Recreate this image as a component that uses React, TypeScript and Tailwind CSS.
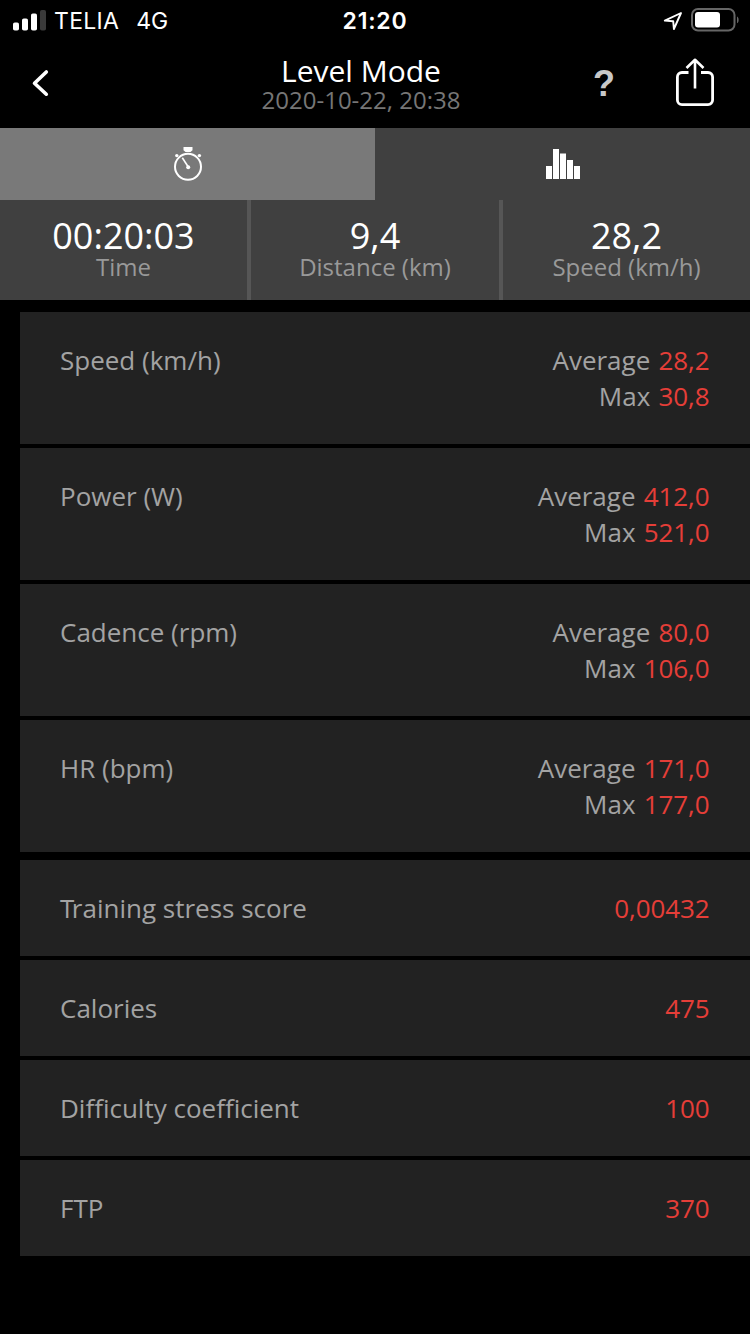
type Metric = { label: string; average: string; max: string };
type Total = { label: string; value: string; labelClass?: string };

const summary: Total[] = [
  { label: "Time", value: "00:20:03" },
  { label: "Distance (km)", value: "9,4" },
  { label: "Speed (km/h)", value: "28,2" },
];

const metrics: Metric[] = [
  { label: "Speed (km/h)", average: "28,2", max: "30,8" },
  { label: "Power (W)", average: "412,0", max: "521,0" },
  { label: "Cadence (rpm)", average: "80,0", max: "106,0" },
  { label: "HR (bpm)", average: "171,0", max: "177,0" },
];

const totals: Total[] = [
  // pull the "r" in under the "T"
  {
    label: "Training stress score",
    value: "0,00432",
    labelClass: "first-letter:tracking-[-2.5px]",
  },
  { label: "Calories", value: "475" },
  { label: "Difficulty coefficient", value: "100" },
  { label: "FTP", value: "370" },
];

function StatusBar() {
  return (
    <div className="grid h-10 grid-cols-3 items-center pl-[13px] pr-[11px] font-['Inter',sans-serif] text-[23px] leading-[38px]">
      <div className="flex items-center">
        <svg className="mr-[8px]" width="33" height="21" viewBox="0 0 33 21">
          <g fill="#fff">
            <rect x="0" y="12.5" width="6" height="8" rx="1.8" />
            <rect x="9" y="8.5" width="6" height="12" rx="1.8" />
            <rect x="18" y="3.5" width="6" height="17" rx="1.8" />
          </g>
          <rect x="27" y="0" width="6" height="20.5" rx="1.8" fill="#3a3a3a" />
        </svg>
        <span className="pt-[2px] tracking-[0.3px]">TELIA</span>
        <span className="ml-[17px] pt-[2px]">4G</span>
      </div>
      <div className="pt-[2px] pr-[2px] text-center font-semibold tracking-[0.8px]">21:20</div>
      <div className="flex items-center justify-end gap-[8px]">
        <svg className="mt-[1px]" width="20" height="20" viewBox="0 0 20 20" fill="none">
          <path
            d="M18 2 L1.8 9.6 L10.2 10.2 L10.9 18 Z"
            stroke="#fff"
            strokeWidth="1.9"
            strokeLinejoin="round"
          />
        </svg>
        <svg width="48" height="24" viewBox="0 0 48 24" fill="none">
          <rect x="1" y="1" width="42.5" height="21.5" rx="6" stroke="#666" strokeWidth="2" />
          <rect x="4" y="4" width="25" height="15.5" rx="3" fill="#fff" />
          <path d="M46 8.5 C48.2 9.8 48.2 14 46 15.2 Z" fill="#666" />
        </svg>
      </div>
    </div>
  );
}

function Header() {
  return (
    <header className="grid h-[88px] grid-cols-[200px_322px_228px]">
      <button className="flex items-start pl-[31px] pt-[29px]" aria-label="Back">
        <svg width="18" height="28" viewBox="0 0 18 28" fill="none">
          <path
            d="M15.3 3 L3.5 14.2 L15.3 25.2"
            stroke="#fff"
            strokeWidth="3.6"
            strokeLinecap="round"
            strokeLinejoin="round"
          />
        </svg>
      </button>
      <div className="flex flex-col items-center pt-[15px]">
        <h1 className="text-[30px] leading-8">Level Mode</h1>
        <p className="text-2xl leading-[26px] text-[#767676]">2020-10-22, 20:38</p>
      </div>
      <div className="flex items-start justify-end pr-9 pt-[18px]">
        <button
          className="mr-[61px] mt-[6px] font-['Liberation_Sans',sans-serif] text-[36px] leading-10 font-bold text-[#c8c8c8]"
          aria-label="Help"
        >
          ?
        </button>
        <button aria-label="Share">
          <svg width="38" height="49" viewBox="0 0 38 49" fill="none" stroke="#fff">
            <path
              d="M12.5 14.5 H6 A4.6 4.6 0 0 0 1.4 19.1 V42 A4.6 4.6 0 0 0 6 46.6 H32 A4.6 4.6 0 0 0 36.6 42 V19.1 A4.6 4.6 0 0 0 32 14.5 H25"
              strokeWidth="2.8"
            />
            <path
              d="M19 30.5 V2 M10.5 10 L19 1.8 L27.5 10"
              strokeWidth="2.6"
              strokeLinejoin="round"
            />
          </svg>
        </button>
      </div>
    </header>
  );
}

function Tabs() {
  return (
    <div className="grid h-[72px] grid-cols-2">
      <button className="flex items-center justify-center bg-[#797979]" aria-label="Summary">
        <svg width="32" height="36" viewBox="0 0 32 36" fill="none">
          <path d="M11.5 1 H20.5 V4.2 L18.5 6 H13.5 L11.5 4.2 Z" fill="#fff" />
          <circle cx="16" cy="20.8" r="13" stroke="#fff" strokeWidth="2" />
          <path d="M10.3 11.8 L16.3 21" stroke="#fff" strokeWidth="1.6" />
          <circle cx="16.2" cy="21.2" r="2" fill="#fff" />
          <circle cx="4.8" cy="9.6" r="1.7" fill="#fff" />
          <circle cx="27.4" cy="9.6" r="1.7" fill="#fff" />
        </svg>
      </button>
      <button className="flex items-center justify-center bg-[#404040]" aria-label="Charts">
        <svg width="34" height="30" viewBox="0 0 34 30" fill="#fff">
          <rect x="0" y="17" width="6" height="13" />
          <rect x="7" y="0" width="6" height="30" />
          <rect x="14" y="4.5" width="6" height="25.5" />
          <rect x="21" y="11" width="6" height="19" />
          <rect x="28" y="17" width="6" height="13" />
        </svg>
      </button>
    </div>
  );
}

export default function App() {
  return (
    <main className="flex h-[1334px] w-[750px] flex-col bg-black font-['Open_Sans',sans-serif] text-white">
      <StatusBar />
      <Header />
      <Tabs />
      <section className="grid h-[100px] grid-cols-[247px_248px_247px] gap-1 bg-[#565656]">
        {summary.map((item) => (
          <div key={item.label} className="flex flex-col items-center bg-[#404040] pt-[18px]">
            <span className="text-4xl leading-9">{item.value}</span>
            <span className="text-2xl leading-[26px] text-[#999]">{item.label}</span>
          </div>
        ))}
      </section>
      <section className="mt-3 flex flex-col gap-1 pl-5 text-[26px] text-[#a3a3a3]">
        {metrics.map((metric) => (
          <div
            key={metric.label}
            className="flex h-[132px] justify-between bg-[#222] pt-[30px] pr-[40.5px] pl-10 leading-9"
          >
            <span>{metric.label}</span>
            <div className="text-right">
              <p>
                Average{" "}
                <span className="ml-[1.5px] tracking-[-0.1px] text-[#e53e38]">
                  {metric.average}
                </span>
              </p>
              <p>
                Max{" "}
                <span className="ml-[1.5px] tracking-[-0.1px] text-[#e53e38]">{metric.max}</span>
              </p>
            </div>
          </div>
        ))}
      </section>
      <section className="mt-2 flex flex-col gap-1 pl-5 text-[26px] text-[#a3a3a3]">
        {totals.map((total) => (
          <div
            key={total.label}
            className="flex h-24 items-center justify-between bg-[#222] pr-[40.5px] pl-10 leading-9"
          >
            <span className={total.labelClass}>{total.label}</span>
            <span className="tracking-[-0.1px] text-[#e53e38]">{total.value}</span>
          </div>
        ))}
      </section>
    </main>
  );
}
